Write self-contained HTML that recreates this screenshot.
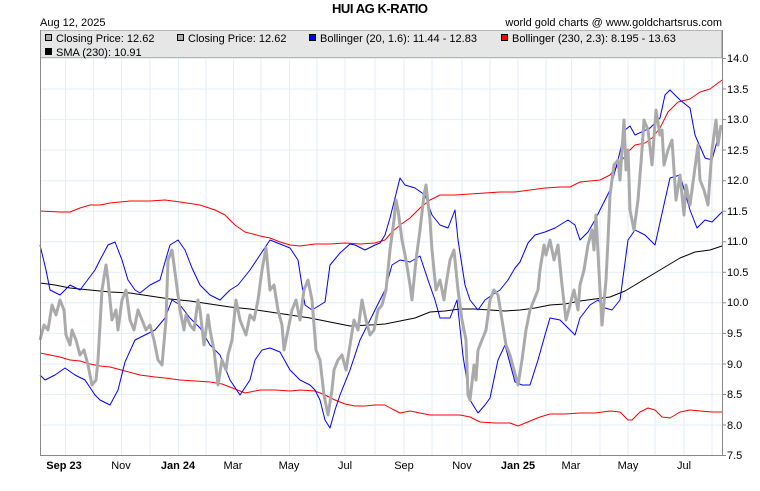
<!DOCTYPE html>
<html><head><meta charset="utf-8"><style>
html,body{margin:0;padding:0;background:#fff;width:760px;height:491px;overflow:hidden;font-family:"Liberation Sans",sans-serif}
svg text{font-family:"Liberation Sans",sans-serif}
</style></head><body>
<svg width="760" height="491" viewBox="0 0 760 491" xmlns="http://www.w3.org/2000/svg">
<text x="380" y="13" text-anchor="middle" font-size="13" font-weight="bold" fill="#000" textLength="96">HUI AG K-RATIO</text>
<text x="40" y="26" font-size="11" fill="#000">Aug 12, 2025</text>
<text x="722" y="26" font-size="11" text-anchor="end" fill="#000">world gold charts @ www.goldchartsrus.com</text>
<!-- grid -->
<g stroke="#e3eef8" stroke-width="1">
<line x1="40" x2="722" y1="58.5" y2="58.5"/><line x1="40" x2="722" y1="89" y2="89"/><line x1="40" x2="722" y1="119.6" y2="119.6"/><line x1="40" x2="722" y1="150" y2="150"/><line x1="40" x2="722" y1="180.7" y2="180.7"/><line x1="40" x2="722" y1="211.2" y2="211.2"/><line x1="40" x2="722" y1="241.8" y2="241.8"/><line x1="40" x2="722" y1="272.3" y2="272.3"/><line x1="40" x2="722" y1="302.8" y2="302.8"/><line x1="40" x2="722" y1="333.4" y2="333.4"/><line x1="40" x2="722" y1="364" y2="364"/><line x1="40" x2="722" y1="394.5" y2="394.5"/><line x1="40" x2="722" y1="425" y2="425"/>
<line y1="30" y2="455" x1="65.5" x2="65.5"/><line y1="30" y2="455" x1="93.5" x2="93.5"/><line y1="30" y2="455" x1="121.5" x2="121.5"/><line y1="30" y2="455" x1="150" x2="150"/><line y1="30" y2="455" x1="178.5" x2="178.5"/><line y1="30" y2="455" x1="206" x2="206"/><line y1="30" y2="455" x1="233.5" x2="233.5"/><line y1="30" y2="455" x1="261" x2="261"/><line y1="30" y2="455" x1="289.5" x2="289.5"/><line y1="30" y2="455" x1="317" x2="317"/><line y1="30" y2="455" x1="345" x2="345"/><line y1="30" y2="455" x1="375" x2="375"/><line y1="30" y2="455" x1="404" x2="404"/><line y1="30" y2="455" x1="432" x2="432"/><line y1="30" y2="455" x1="462" x2="462"/><line y1="30" y2="455" x1="490" x2="490"/><line y1="30" y2="455" x1="518" x2="518"/><line y1="30" y2="455" x1="546" x2="546"/><line y1="30" y2="455" x1="571.5" x2="571.5"/><line y1="30" y2="455" x1="600" x2="600"/><line y1="30" y2="455" x1="628" x2="628"/><line y1="30" y2="455" x1="655" x2="655"/><line y1="30" y2="455" x1="684" x2="684"/><line y1="30" y2="455" x1="712" x2="712"/>
</g>
<!-- legend box -->
<rect x="40.5" y="30.5" width="681" height="27" fill="#e6e6e6" stroke="#b4b4b4"/>
<g font-size="11" fill="#000">
<rect x="45.5" y="34.5" width="6" height="6" fill="#aaa" stroke="#000"/><text x="56" y="42">Closing Price: 12.62</text>
<rect x="177.5" y="34.5" width="6" height="6" fill="#aaa" stroke="#000"/><text x="188" y="42">Closing Price: 12.62</text>
<rect x="309.5" y="34.5" width="6" height="6" fill="#00f" stroke="#000"/><text x="320" y="42">Bollinger (20, 1.6): 11.44 - 12.83</text>
<rect x="501.5" y="34.5" width="6" height="6" fill="#f00" stroke="#000"/><text x="512" y="42">Bollinger (230, 2.3): 8.195 - 13.63</text>
<rect x="45.5" y="48.5" width="6" height="6" fill="#000" stroke="#000"/><text x="56" y="56">SMA (230): 10.91</text>
</g>
<!-- series -->
<g fill="none" stroke-linejoin="round">
<polyline stroke="#f00" stroke-width="1" points="40,211 60,212 70,212 80,208 90,205 100,205 110,203 120,202 130,201 150,201 165,200 180,202 200,205 215,210 225,215 235,225 245,232 260,236 270,238 280,242 290,245 300,246 315,244 330,244 345,243 360,244 375,243 385,240 392,232 400,225 410,218 420,208 430,200 440,195 455,195 470,194 485,193 500,192 515,192 530,190 545,188 560,187 570,187 580,182 590,181 600,180 610,175 620,163 628,152 635,145 645,143 652,138 660,128 668,112 678,102 690,99 700,92 710,89 722,80"/>
<polyline stroke="#f00" stroke-width="1" points="40,353 50,355 60,357 70,360 80,361 90,364 100,366 110,367 125,371 140,375 155,377 165,378 180,380 195,381 210,382 222,384 235,389 245,393 260,390 275,390 290,391 300,390 315,391 325,395 335,400 345,404 355,406 365,406 375,405 385,405 392,409 400,413 410,411 420,413 430,415 445,415 460,415 470,417 480,422 495,423 510,423 518,426 530,421 540,417 550,414 565,414 580,413 595,413 610,411 620,412 628,420 632,420 640,412 648,408 655,410 662,417 670,418 680,412 690,410 700,411 712,412 722,412"/>
<polyline stroke="#000" stroke-width="1" points="40,283 55,285 70,288 90,290 110,292 130,293 150,296 170,299 190,301 210,304 230,307 250,309 270,312 290,315 310,318 330,322 350,326 370,325 385,324 400,321 415,318 430,312 445,311 460,309 475,309 490,310 505,311 520,310 535,308 550,305 565,304 580,301 595,299 610,297 625,291 635,285 650,276 665,267 680,258 695,252 710,250 722,246"/>
<polyline stroke="#00f" stroke-width="1" points="40,245 46,270 50,290 60,295 70,285 80,290 95,270 100,260 108,245 115,242 122,260 128,280 135,290 140,293 150,285 160,280 165,262 170,245 178,240 185,250 192,268 200,285 210,295 220,300 230,290 238,285 250,270 260,255 270,240 280,244 290,248 298,260 305,305 312,310 325,302 330,265 340,253 350,244 355,245 365,250 375,245 380,243 385,235 390,218 395,198 400,178 405,185 415,188 425,195 432,215 440,225 448,228 455,210 458,240 465,285 470,300 478,310 485,300 492,295 500,290 508,280 515,268 520,262 528,243 535,235 545,232 555,228 568,220 575,225 580,240 588,232 595,220 600,210 610,190 618,160 625,130 630,126 635,135 650,128 660,118 665,95 670,90 680,100 690,108 695,135 705,158 712,160 720,130 722,128"/>
<polyline stroke="#00f" stroke-width="1" points="40,375 45,380 55,375 65,368 75,375 85,380 95,395 100,400 110,405 118,390 125,362 135,340 145,335 155,330 165,318 172,300 180,305 190,318 200,328 210,345 220,355 230,380 240,395 250,380 255,360 262,350 270,348 280,352 290,370 300,380 310,385 315,390 320,400 325,420 330,428 335,410 340,395 350,370 360,340 370,320 380,300 385,290 392,265 400,260 410,262 420,256 428,280 435,300 440,318 450,318 457,300 463,356 470,400 478,413 485,405 490,398 498,360 505,345 515,382 522,385 530,385 538,360 545,335 550,318 560,320 570,330 575,335 580,318 590,305 598,300 605,308 612,310 620,300 628,240 635,230 645,235 655,245 665,200 670,178 680,175 690,210 697,228 705,220 712,222 722,212"/>
<polyline stroke="#aaa" stroke-width="3" points="40,340 44,325 48,330 52,305 56,315 60,300 64,310 66,335 70,345 72,330 76,340 80,355 84,350 88,365 92,385 96,380 98,360 102,290 106,265 108,280 112,320 116,310 118,330 122,300 126,290 130,320 134,330 138,310 142,320 146,330 150,325 154,340 158,360 162,365 166,320 168,260 172,250 176,280 180,310 184,330 186,315 190,325 194,330 198,300 200,310 204,345 208,315 210,330 214,350 218,385 222,360 226,370 228,355 232,340 236,300 240,320 246,335 250,315 254,320 258,300 262,270 266,248 270,290 274,285 278,310 282,325 284,350 288,330 292,310 296,300 300,320 304,290 308,280 312,300 316,350 320,360 324,395 328,415 332,390 334,370 338,360 342,355 346,370 350,345 354,320 358,330 362,300 366,320 370,335 374,330 378,310 382,305 386,290 390,250 394,220 396,200 398,210 402,240 406,260 410,285 412,300 416,260 420,230 424,195 426,185 430,220 432,250 436,290 440,280 444,300 446,285 450,260 454,250 458,290 462,320 466,340 468,395 470,400 474,365 476,380 478,350 482,340 486,330 490,300 494,290 498,295 502,320 506,345 510,355 514,370 518,385 522,360 526,330 530,310 534,300 538,290 540,270 544,245 546,255 550,240 554,260 558,245 562,285 566,320 570,305 574,290 578,310 580,285 584,270 588,245 592,230 594,250 596,215 600,290 602,325 606,280 608,240 610,195 614,165 618,160 620,180 624,120 626,170 628,150 630,210 634,230 638,200 642,150 644,120 648,130 652,165 656,110 660,135 662,130 664,165 668,150 672,140 676,200 680,175 684,215 686,185 690,205 694,175 698,145 700,180 704,190 708,205 712,150 716,120 718,145 721,125"/>
</g>
<!-- axes -->
<polyline points="40.5,30 40.5,455.5 722.5,455.5 722.5,30" fill="none" stroke="#888" stroke-width="1"/>
<g stroke="#888"><line x1="722" x2="726" y1="58.5" y2="58.5"/><line x1="722" x2="726" y1="89" y2="89"/><line x1="722" x2="726" y1="119.6" y2="119.6"/><line x1="722" x2="726" y1="150" y2="150"/><line x1="722" x2="726" y1="180.7" y2="180.7"/><line x1="722" x2="726" y1="211.2" y2="211.2"/><line x1="722" x2="726" y1="241.8" y2="241.8"/><line x1="722" x2="726" y1="272.3" y2="272.3"/><line x1="722" x2="726" y1="302.8" y2="302.8"/><line x1="722" x2="726" y1="333.4" y2="333.4"/><line x1="722" x2="726" y1="364" y2="364"/><line x1="722" x2="726" y1="394.5" y2="394.5"/><line x1="722" x2="726" y1="425" y2="425"/><line x1="722" x2="726" y1="455.5" y2="455.5"/></g>
<g font-size="11" fill="#000">
<text x="727" y="62">14.0</text><text x="727" y="93">13.5</text><text x="727" y="123">13.0</text><text x="727" y="154">12.5</text><text x="727" y="184">12.0</text><text x="727" y="215">11.5</text><text x="727" y="245">11.0</text><text x="727" y="276">10.5</text><text x="727" y="306">10.0</text><text x="727" y="337">9.5</text><text x="727" y="368">9.0</text><text x="727" y="398">8.5</text><text x="727" y="429">8.0</text><text x="727" y="459">7.5</text>
</g>
<g font-size="11" fill="#000" text-anchor="middle">
<text x="64" y="469" font-weight="bold">Sep 23</text><text x="121" y="469">Nov</text><text x="178" y="469" font-weight="bold">Jan 24</text><text x="233" y="469">Mar</text><text x="289" y="469">May</text><text x="345" y="469">Jul</text><text x="404" y="469">Sep</text><text x="462" y="469">Nov</text><text x="518" y="469" font-weight="bold">Jan 25</text><text x="571" y="469">Mar</text><text x="628" y="469">May</text><text x="684" y="469">Jul</text>
</g>
</svg>
</body></html>
